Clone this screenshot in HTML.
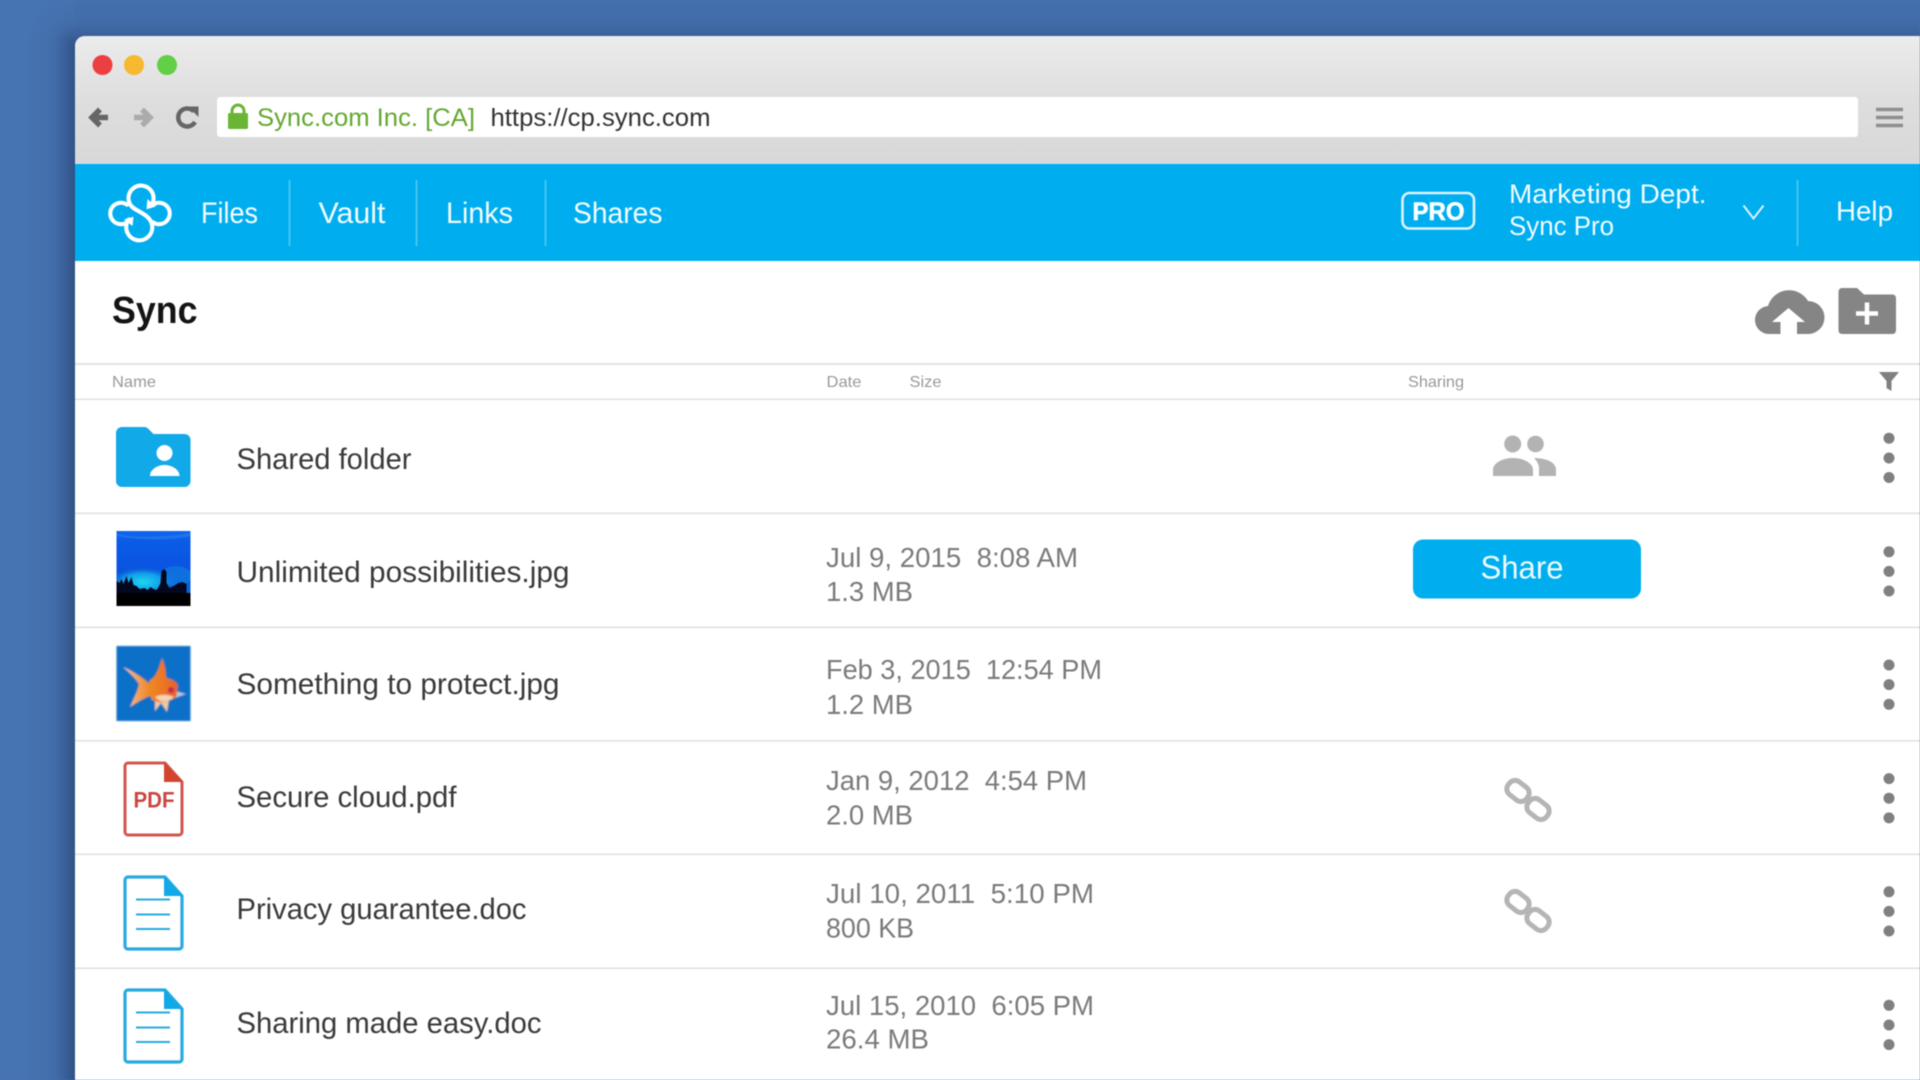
<!DOCTYPE html>
<html><head><meta charset="utf-8"><title>Sync</title>
<style>
html,body{margin:0;padding:0;width:1920px;height:1080px;overflow:hidden;background:#4673b2}
svg{display:block;position:absolute;left:0;top:0;filter:blur(.45px)}
text{font-family:"Liberation Sans",sans-serif;white-space:pre}
.n{font-size:30px;fill:#3a3a3a}
.d{font-size:28px;fill:#7b7b7b}
.h{font-size:16px;fill:#999}
.w{font-size:30px;fill:#f2fbff}
.k{fill:#808080}
.l{fill:none;stroke:#b5b5b5;stroke-width:5}
.doc{fill:none;stroke:#2aa9df;stroke-width:3.2;stroke-linejoin:round}
</style></head><body>
<svg width="1920" height="1080" viewBox="0 0 1920 1080" xmlns="http://www.w3.org/2000/svg">
<defs>
<linearGradient id="bar" x1="0" y1="0" x2="0" y2="1"><stop offset="0" stop-color="#ececec"/><stop offset=".5" stop-color="#dedede"/><stop offset="1" stop-color="#d9d8d9"/></linearGradient>
<linearGradient id="sea" x1="0" y1="0" x2="0" y2="1"><stop offset="0" stop-color="#1066f0"/><stop offset=".12" stop-color="#0c5ce8"/><stop offset=".5" stop-color="#0a54e0"/><stop offset=".8" stop-color="#0a60d8"/></linearGradient>
<radialGradient id="glow" cx=".5" cy=".5" r=".5"><stop offset="0" stop-color="#1cd8f2"/><stop offset=".6" stop-color="#14a8ea" stop-opacity=".85"/><stop offset="1" stop-color="#0a60d8" stop-opacity="0"/></radialGradient>
<linearGradient id="tail" x1="0" y1="0" x2="1" y2="0"><stop offset="0" stop-color="#f6cdb0"/><stop offset=".5" stop-color="#f2a25a"/><stop offset="1" stop-color="#ef7f1e"/></linearGradient>
<linearGradient id="body" x1="0" y1="0" x2="1" y2="0"><stop offset="0" stop-color="#f08a20"/><stop offset="1" stop-color="#e8602a"/></linearGradient>
<linearGradient id="shl" gradientUnits="userSpaceOnUse" x1="75" y1="0" x2="25" y2="0">
<stop offset="0" stop-color="#14264f" stop-opacity=".44"/><stop offset=".2" stop-color="#14264f" stop-opacity=".25"/><stop offset=".4" stop-color="#14264f" stop-opacity=".1"/><stop offset=".6" stop-color="#14264f" stop-opacity=".04"/><stop offset="1" stop-color="#14264f" stop-opacity="0"/></linearGradient>
<linearGradient id="sht" gradientUnits="userSpaceOnUse" x1="0" y1="46" x2="0" y2="-4">
<stop offset="0" stop-color="#14264f" stop-opacity=".44"/><stop offset=".2" stop-color="#14264f" stop-opacity=".25"/><stop offset=".4" stop-color="#14264f" stop-opacity=".12"/><stop offset=".6" stop-color="#14264f" stop-opacity=".07"/><stop offset="1" stop-color="#14264f" stop-opacity=".03"/></linearGradient>
<radialGradient id="shc" gradientUnits="userSpaceOnUse" cx="75" cy="46" r="50">
<stop offset="0" stop-color="#14264f" stop-opacity=".44"/><stop offset=".2" stop-color="#14264f" stop-opacity=".25"/><stop offset=".4" stop-color="#14264f" stop-opacity=".1"/><stop offset=".6" stop-color="#14264f" stop-opacity=".04"/><stop offset="1" stop-color="#14264f" stop-opacity="0"/></radialGradient>
<filter id="sft" x="-5%" y="-5%" width="110%" height="110%"><feGaussianBlur stdDeviation=".7"/></filter>
<clipPath id="thumb"><rect x="116.500" y="531" width="74" height="75"/></clipPath>
</defs>

<!-- desktop background -->
<rect width="1920" height="1080" fill="#4673b2"/>
<rect x="25" y="46" width="50" height="1034" fill="url(#shl)"/>
<rect x="75" y="0" width="1845" height="46" fill="url(#sht)"/>
<rect x="25" y="0" width="50" height="46" fill="url(#shc)"/>

<!-- window chrome -->
<path d="M75 1080V46a10 10 0 0 1 10-10H1920V1080Z" fill="#fff"/>
<path d="M75 164V46a10 10 0 0 1 10-10H1920V164Z" fill="url(#bar)"/>
<circle cx="102.500" cy="65" r="10" fill="#ec3f41"/>
<circle cx="134" cy="65" r="10" fill="#f6b92f"/>
<circle cx="167" cy="65" r="10" fill="#62cf47"/>

<!-- toolbar icons -->
<path d="M108 117.500H95M100 109.500l-8 8 8 8" fill="none" stroke="#666" stroke-width="5.500"/>
<path d="M134 117.500H147M142 109.500l8 8-8 8" fill="none" stroke="#ababab" stroke-width="5.500"/>
<path d="M194 111.500A9 9 0 1 0 195 122" fill="none" stroke="#666" stroke-width="4.500"/>
<path d="M188 106.500h10.500v10.500Z" fill="#666"/>

<!-- address bar -->
<rect x="217" y="97" width="1641" height="40" rx="3" fill="#fff"/>
<path d="M232 114v-3a6 6 0 0 1 12 0v3" fill="none" stroke="#6bb534" stroke-width="3"/>
<rect x="228" y="113" width="20" height="16" rx="1.500" fill="#6bb534"/>
<text x="257" y="126" font-size="25" fill="#65a830" textLength="218" lengthAdjust="spacingAndGlyphs">Sync.com Inc. [CA]</text>
<text x="490.500" y="126" font-size="25" fill="#333" textLength="220" lengthAdjust="spacingAndGlyphs">https://cp.sync.com</text>
<path d="M1876 109.500h27M1876 117.500h27M1876 125.500h27" stroke="#8e8e8e" stroke-width="3.600" fill="none"/>

<!-- nav bar -->
<rect x="75" y="163" width="1845" height="1.500" fill="#bfe3f3"/>
<rect x="75" y="164" width="1845" height="97" fill="#00aeef"/>
<g transform="translate(140 213) scale(.93) translate(-140 -213)">
<g fill="none" stroke="#fff" stroke-width="4.400" stroke-linecap="round">
<path d="M152 205A13.500 13.500 0 1 0 129 203C132 211 151 213 153 226A14 14 0 1 1 128 220"/>
<path d="M126 204A11.500 11.500 0 1 0 126 223"/>
<path d="M154 204A11.500 11.500 0 1 1 154 223"/>
</g>
<path d="M148 198l-1 11 10-3ZM132 227l1-10-10 3Z" fill="#fff"/>
</g>
<text class="w" x="201" y="223" textLength="57" lengthAdjust="spacingAndGlyphs">Files</text>
<text class="w" x="318.500" y="223" textLength="67" lengthAdjust="spacingAndGlyphs">Vault</text>
<text class="w" x="446" y="223" textLength="67" lengthAdjust="spacingAndGlyphs">Links</text>
<text class="w" x="573" y="223" textLength="89.500" lengthAdjust="spacingAndGlyphs">Shares</text>
<path d="M289.500 180v66M416.500 180v66M545.500 180v66M1797.500 180v66" stroke="#55c8f3" stroke-width="1.600" fill="none"/>
<rect x="1402.500" y="193" width="71.500" height="35.500" rx="7" fill="none" stroke="#d9f3fd" stroke-width="2.600"/>
<text x="1412.500" y="220" font-size="25" font-weight="bold" fill="#fff" stroke="#fff" stroke-width=".6" textLength="52" lengthAdjust="spacingAndGlyphs">PRO</text>
<text x="1509" y="203" font-size="27" fill="#f2fbff" textLength="197.500" lengthAdjust="spacingAndGlyphs">Marketing Dept.</text>
<text x="1509" y="235" font-size="27" fill="#f2fbff" textLength="105" lengthAdjust="spacingAndGlyphs">Sync Pro</text>
<path d="M1743.500 205.500l10 13 10-13" fill="none" stroke="#d9f3fd" stroke-width="2"/>
<text x="1836" y="220.500" font-size="28" fill="#f2fbff" textLength="57" lengthAdjust="spacingAndGlyphs">Help</text>

<!-- title row -->
<text x="112" y="323" font-size="38" font-weight="bold" fill="#141414" textLength="85.500" lengthAdjust="spacingAndGlyphs">Sync</text>
<path d="M1770 334a14 14 0 0 1-2-28A22 22 0 0 1 1808 301a16.500 16.500 0 0 1 0 33Z" fill="#858585"/>
<path d="M1788.500 308l16.500 14H1797v12h-16.500v-12h-8.500Z" fill="#fff"/>
<path d="M1842 288h15l7 6.500h28.500a3.500 3.500 0 0 1 3.500 3.500v32.500a3.500 3.500 0 0 1-3.500 3.500h-50.500a3.500 3.500 0 0 1-3.500-3.500V291.500a3.500 3.500 0 0 1 3.500-3.500Z" fill="#858585"/>
<path d="M1867 302.500v22M1856 313.500h22" stroke="#fff" stroke-width="4.500" fill="none"/>

<!-- table header -->
<rect x="75" y="363" width="1845" height="2" fill="#e3e3e3"/>
<rect x="75" y="398.500" width="1845" height="1.500" fill="#e0e0e0"/>
<text class="h" x="112" y="387" textLength="44" lengthAdjust="spacingAndGlyphs">Name</text>
<text class="h" x="826.500" y="387" textLength="35" lengthAdjust="spacingAndGlyphs">Date</text>
<text class="h" x="909.500" y="387" textLength="32" lengthAdjust="spacingAndGlyphs">Size</text>
<text class="h" x="1408" y="387" textLength="56" lengthAdjust="spacingAndGlyphs">Sharing</text>
<path d="M1879 372h20l-7.500 9v10l-5-3v-7Z" fill="#808080"/>

<!-- row separators -->
<g fill="#e2e2e2">
<rect x="75" y="512.500" width="1845" height="1.600"/>
<rect x="75" y="626.500" width="1845" height="1.600"/>
<rect x="75" y="740" width="1845" height="1.600"/>
<rect x="75" y="853.500" width="1845" height="1.600"/>
<rect x="75" y="967.500" width="1845" height="1.600"/>
</g>

<!-- row icons -->
<path d="M122 427h22a6 6 0 0 1 4.500 2l5 5h31a6 6 0 0 1 6 6v41a6 6 0 0 1-6 6H122a6 6 0 0 1-6-6V433a6 6 0 0 1 6-6Z" fill="#12a9e8"/>
<circle cx="164.500" cy="453" r="8" fill="#fff"/>
<path d="M150 476c0-7 8-11 14.500-11s15 4 15 11Z" fill="#fff"/>

<g clip-path="url(#thumb)">
<rect x="116.500" y="531" width="74" height="75" fill="url(#sea)"/>
<path d="M116.500 534c20 4 50 3 74-1v3c-22 5-52 4-74 0Z" fill="#2f86ee" opacity=".5"/>
<ellipse cx="143" cy="582" rx="34" ry="15" fill="url(#glow)"/>
<ellipse cx="176" cy="576" rx="16" ry="10" fill="#1080e0" opacity=".6"/>
<path d="M116.500 606v-25l3 2 2-4 2 5 3-8 2 7 3-6 2 8 3 1 3 3 5-1 3 2 3-3 3 2 3 1 2-3 2-4 1-12 3-2 2 3 0 11 3 5 4-2 5-3 4-1 4 2v22Z" fill="#020820"/>
<rect x="116.500" y="593" width="74" height="13" fill="#000"/>
</g>

<g filter="url(#sft)">
<rect x="116.500" y="646" width="74" height="75" fill="#0c6fc8"/>
<path d="M123 667C133 671 143 678 151 685L152 695C144 698 136 703 130 707C134 698 138 690 139 684C135 678 129 672 123 667Z" fill="url(#tail)"/>
<path d="M155 698L155 711L161 703L167 712L169 700Z" fill="#f2c8a4"/>
<path d="M176 691L186 694L175 698Z" fill="#b8c4d4"/>
<path d="M150 680C155 678 158 672 162 658C165 665 166 672 166 678C172 679 177 682 178 686L176 697C170 702 160 704 152 700C149 694 148 686 150 680Z" fill="url(#body)"/>
<path d="M155 697C160 694 168 694 174 697C168 703 160 703 155 697Z" fill="#f4d2b4"/>
<circle cx="171" cy="690" r="3" fill="#c02a50"/>
</g>

<path d="M128 763h37l17 19v50a3 3 0 0 1-3 3h-51a3 3 0 0 1-3-3V766a3 3 0 0 1 3-3Z" fill="#fff" stroke="#d1574f" stroke-width="3" stroke-linejoin="round"/>
<path d="M164 762l19 20h-19Z" fill="#d1452f"/>
<text x="133.500" y="807.500" font-size="22" font-weight="bold" fill="#c9473f" textLength="41" lengthAdjust="spacingAndGlyphs">PDF</text>

<path class="doc" d="M128 877h37l17 19v50a3 3 0 0 1-3 3h-51a3 3 0 0 1-3-3V880a3 3 0 0 1 3-3Z"/>
<path d="M164 876l19 20h-19Z" fill="#12a9e8"/>
<path d="M136 899.500h34M136 914.500h34M136 929h34" stroke="#2aa9df" stroke-width="2" fill="none"/>

<path class="doc" d="M128 990h37l17 19v50a3 3 0 0 1-3 3h-51a3 3 0 0 1-3-3V993a3 3 0 0 1 3-3Z"/>
<path d="M164 989l19 20h-19Z" fill="#12a9e8"/>
<path d="M136 1012.500h34M136 1027.500h34M136 1042h34" stroke="#2aa9df" stroke-width="2" fill="none"/>

<!-- file names -->
<text class="n" x="236.500" y="469" textLength="175" lengthAdjust="spacingAndGlyphs">Shared folder</text>
<text class="n" x="236.500" y="582" textLength="333" lengthAdjust="spacingAndGlyphs">Unlimited possibilities.jpg</text>
<text class="n" x="236.500" y="694" textLength="323" lengthAdjust="spacingAndGlyphs">Something to protect.jpg</text>
<text class="n" x="236.500" y="807" textLength="220" lengthAdjust="spacingAndGlyphs">Secure cloud.pdf</text>
<text class="n" x="236.500" y="919" textLength="290" lengthAdjust="spacingAndGlyphs">Privacy guarantee.doc</text>
<text class="n" x="236.500" y="1033" textLength="305" lengthAdjust="spacingAndGlyphs">Sharing made easy.doc</text>

<!-- dates and sizes -->
<text class="d" x="826" y="567" textLength="252" lengthAdjust="spacingAndGlyphs">Jul 9, 2015  8:08 AM</text>
<text class="d" x="826" y="601" textLength="87" lengthAdjust="spacingAndGlyphs">1.3 MB</text>
<text class="d" x="826" y="679" textLength="276" lengthAdjust="spacingAndGlyphs">Feb 3, 2015  12:54 PM</text>
<text class="d" x="826" y="714" textLength="87" lengthAdjust="spacingAndGlyphs">1.2 MB</text>
<text class="d" x="826" y="790" textLength="261" lengthAdjust="spacingAndGlyphs">Jan 9, 2012  4:54 PM</text>
<text class="d" x="826" y="824.500" textLength="87" lengthAdjust="spacingAndGlyphs">2.0 MB</text>
<text class="d" x="826" y="903" textLength="268" lengthAdjust="spacingAndGlyphs">Jul 10, 2011  5:10 PM</text>
<text class="d" x="826" y="937.500" textLength="88" lengthAdjust="spacingAndGlyphs">800 KB</text>
<text class="d" x="826" y="1015" textLength="268" lengthAdjust="spacingAndGlyphs">Jul 15, 2010  6:05 PM</text>
<text class="d" x="826" y="1048.500" textLength="103" lengthAdjust="spacingAndGlyphs">26.4 MB</text>

<!-- sharing column -->
<circle cx="1512.700" cy="444" r="8.500" fill="#b3b3b3"/>
<circle cx="1535.500" cy="444" r="8.300" fill="#b3b3b3"/>
<path d="M1493 476v-7c1-7 11-11 20-11s19 4 20 11v7Z" fill="#b3b3b3"/>
<path d="M1534 458c10 0 21 3 22 11v7h-17v-8c0-3-2-7-5-10Z" fill="#b3b3b3"/>

<rect x="1413" y="539.500" width="228" height="59" rx="10" fill="#00aeef"/>
<text x="1480.500" y="578.500" font-size="32" fill="#eafaff" textLength="83" lengthAdjust="spacingAndGlyphs">Share</text>

<g>
<rect class="l" x="1506.500" y="783" width="23" height="16" rx="7" transform="rotate(38 1518 791)"/>
<rect class="l" x="1526.500" y="801" width="23" height="16" rx="7" transform="rotate(38 1538 809)"/>
</g>
<g>
<rect class="l" x="1506.500" y="894" width="23" height="16" rx="7" transform="rotate(38 1518 902)"/>
<rect class="l" x="1526.500" y="912" width="23" height="16" rx="7" transform="rotate(38 1538 920)"/>
</g>

<!-- kebab menus -->
<g class="k">
<circle cx="1889" cy="438.200" r="5.500"/><circle cx="1889" cy="458" r="5.500"/><circle cx="1889" cy="477.500" r="5.500"/>
<circle cx="1889" cy="551.800" r="5.500"/><circle cx="1889" cy="571.400" r="5.500"/><circle cx="1889" cy="591" r="5.500"/>
<circle cx="1889" cy="665" r="5.500"/><circle cx="1889" cy="684.600" r="5.500"/><circle cx="1889" cy="704.300" r="5.500"/>
<circle cx="1889" cy="778.600" r="5.500"/><circle cx="1889" cy="798.200" r="5.500"/><circle cx="1889" cy="817.900" r="5.500"/>
<circle cx="1889" cy="891.800" r="5.500"/><circle cx="1889" cy="911.400" r="5.500"/><circle cx="1889" cy="931" r="5.500"/>
<circle cx="1889" cy="1005.300" r="5.500"/><circle cx="1889" cy="1025" r="5.500"/><circle cx="1889" cy="1044.600" r="5.500"/>
</g>
</svg>
</body></html>
